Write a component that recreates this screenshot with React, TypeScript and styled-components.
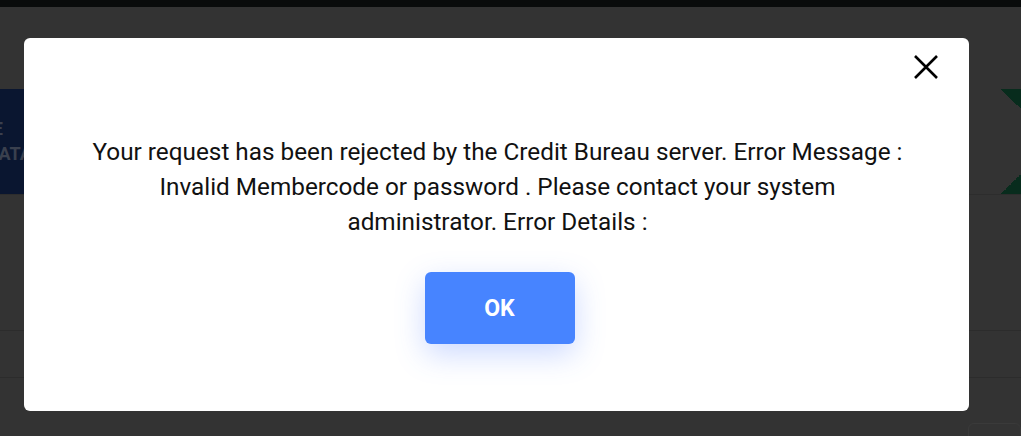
import React from "react";
import styled, { createGlobalStyle } from "styled-components";

const GlobalStyle = createGlobalStyle`
  html, body {
    margin: 0;
    padding: 0;
    background: #333333;
    font-family: Roboto, "Liberation Sans", Arial, sans-serif;
  }
  * { box-sizing: border-box; }
`;

const Page = styled.div`
  position: relative;
  width: 100%;
  height: 436px;
  overflow: hidden;
  background: #333333;
  display: flex;
  flex-direction: column;
`;

const TopBar = styled.div`
  height: 7px;
  background: #090b0b;
  flex: none;
`;

const NavArea = styled.div`
  height: 82px;
  flex: none;
`;

const Banner = styled.div`
  height: 106px;
  flex: none;
  display: flex;
  justify-content: space-between;
  border-bottom: 1px solid #2d2d2d;
`;

const NavyPanel = styled.div`
  width: 24px;
  background: #0a1630;
  overflow: hidden;
  padding-top: 27px;
  font-weight: 700;
  font-size: 18px;
  line-height: 25px;
  color: #3a404e;
  white-space: nowrap;
`;

const PanelLine = styled.div<{ $shift: number }>`
  margin-left: ${(p) => p.$shift}px;
`;

const GreenPanel = styled.div`
  width: 20px;
  background:
    linear-gradient(to bottom left, #082c1d 50%, transparent 50%) top right / 20px 20px no-repeat,
    linear-gradient(to top left, #082c1d 50%, transparent 50%) bottom right / 20px 20px no-repeat;
`;

const Spacer = styled.div<{ $h: number }>`
  height: ${(p) => p.$h}px;
  flex: none;
`;

const TableRow = styled.div`
  height: 48px;
  flex: none;
  border-top: 1px solid #2c2c2c;
  border-bottom: 1px solid #2c2c2c;
`;

const BottomRow = styled.div`
  display: flex;
  justify-content: flex-end;
  padding-top: 45px;
`;

const CornerBox = styled.div`
  width: 53px;
  height: 40px;
  border: 1px solid #3a3a3a;
  border-radius: 6px;
`;

const Modal = styled.div`
  position: absolute;
  top: 38px;
  left: 24px;
  width: 945px;
  height: 373px;
  padding-left: 6px;
  background: #ffffff;
  border-radius: 6px;
  display: flex;
  flex-direction: column;
  align-items: center;
`;

const CloseRow = styled.div`
  align-self: stretch;
  display: flex;
  justify-content: flex-end;
  padding: 16px 30px 0 0;
`;

const CloseButton = styled.button`
  width: 26px;
  height: 26px;
  padding: 0;
  border: none;
  background: transparent;
  display: flex;
  align-items: center;
  justify-content: center;
  cursor: pointer;
`;

const Message = styled.p`
  margin: 54px 4px 0 0;
  font-size: 24.3px;
  line-height: 35px;
  font-weight: 400;
  color: #111111;
  text-align: center;
  white-space: nowrap;
`;

const OkButton = styled.button`
  margin-top: 33px;
  width: 150px;
  height: 72px;
  border: none;
  border-radius: 6px;
  background: #4784ff;
  color: #ffffff;
  font-family: Roboto, "Liberation Sans", Arial, sans-serif;
  font-size: 23px;
  font-weight: 700;
  box-shadow: 0 10px 30px rgba(71, 120, 255, 0.28);
  cursor: pointer;
`;

export default function App() {
  return (
    <>
      <GlobalStyle />
      <Page>
        <TopBar />
        <NavArea />
        <Banner>
          <NavyPanel>
            <PanelLine $shift={-54}>SCORE</PanelLine>
            <PanelLine $shift={-13}>DATA</PanelLine>
          </NavyPanel>
          <GreenPanel />
        </Banner>
        <Spacer $h={135} />
        <TableRow />
        <BottomRow>
          <CornerBox />
        </BottomRow>
        <Modal role="dialog">
          <CloseRow>
            <CloseButton aria-label="Close">
              <svg width="26" height="26" viewBox="0 0 26 26">
                <path d="M2 2 L24 24 M24 2 L2 24" stroke="#000" strokeWidth="2.6" strokeLinecap="butt" />
              </svg>
            </CloseButton>
          </CloseRow>
          <Message>
            Your request has been rejected by the Credit Bureau server. Error Message :
            <br />
            Invalid Membercode or password . Please contact your system
            <br />
            administrator. Error Details :
          </Message>
          <OkButton>OK</OkButton>
        </Modal>
      </Page>
    </>
  );
}
